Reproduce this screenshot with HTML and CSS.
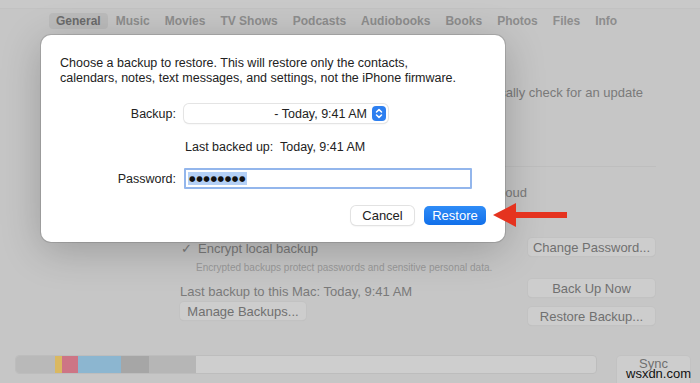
FILE: index.html
```html
<!DOCTYPE html>
<html lang="en">
<head>
  <meta charset="UTF-8">
  <meta name="viewport" content="width=device-width, initial-scale=1.0">
  <title>Restore from backup</title>
  <link rel="stylesheet" href="styles.css">
</head>
<body>
  <div class="window">
    <div class="titlebar"></div>

    <nav class="tabs">
      <span class="tab active">General</span>
      <span class="tab">Music</span>
      <span class="tab">Movies</span>
      <span class="tab">TV Shows</span>
      <span class="tab">Podcasts</span>
      <span class="tab">Audiobooks</span>
      <span class="tab">Books</span>
      <span class="tab">Photos</span>
      <span class="tab">Files</span>
      <span class="tab">Info</span>
    </nav>

    <section class="general">
      <div class="update-row">
        <p class="update-text">Your Mac will automatically check for an update</p>
      </div>
      <hr class="divider">
      <div class="icloud-row">
        <p class="icloud-text">Back up all of the data on your iPhone to iCloud</p>
      </div>

      <div class="backups">
        <div class="backups-left">
          <p class="encrypt"><span class="check">&#10003;</span>Encrypt local backup</p>
          <p class="encrypt-note">Encrypted backups protect passwords and sensitive personal data.</p>
          <p class="last-backup">Last backup to this Mac: Today, 9:41 AM</p>
          <button class="bg-btn manage">Manage Backups...</button>
        </div>
        <div class="backups-right">
          <button class="bg-btn">Change Password...</button>
          <button class="bg-btn up-now">Back Up Now</button>
          <button class="bg-btn">Restore Backup...</button>
        </div>
      </div>
    </section>

    <footer class="footer">
      <div class="storage">
        <span class="seg seg-other" style="width: 39px"></span>
        <span class="seg seg-yellow" style="width: 7px"></span>
        <span class="seg seg-pink" style="width: 16px"></span>
        <span class="seg seg-blue" style="width: 43px"></span>
        <span class="seg seg-dark" style="width: 28px"></span>
        <span class="seg seg-grey" style="width: 47px"></span>
      </div>
      <button class="bg-btn sync">Sync</button>
    </footer>

    <!-- sheet on top of the settings -->
    <div class="dialog">
      <p class="dialog-text">Choose a backup to restore. This will restore only the contacts,<br>calendars, notes, text messages, and settings, not the iPhone firmware.</p>

      <div class="form">
        <label class="form-label">Backup:</label>
        <div class="select">
          <span class="select-value">- Today, 9:41 AM</span>
          <span class="stepper">
            <svg width="14" height="15" viewBox="0 0 14 15">
              <path d="M4.5 6 L7 3.6 L9.5 6" fill="none" stroke="#fff" stroke-width="1.5" stroke-linecap="round" stroke-linejoin="round"/>
              <path d="M4.5 9 L7 11.4 L9.5 9" fill="none" stroke="#fff" stroke-width="1.5" stroke-linecap="round" stroke-linejoin="round"/>
            </svg>
          </span>
        </div>

        <span></span>
        <p class="last-backed">Last backed up:&nbsp; Today, 9:41 AM</p>

        <label class="form-label pw-label">Password:</label>
        <div class="password"><span class="dots">&#9679;&#9679;&#9679;&#9679;&#9679;&#9679;&#9679;&#9679;</span></div>
      </div>

      <div class="dialog-buttons">
        <button class="btn cancel">Cancel</button>
        <button class="btn restore">Restore</button>
      </div>
    </div>

    <svg class="arrow" width="74" height="26" viewBox="0 0 74 26">
      <polygon points="0,13 23,1 23,25" fill="#e5331f"/>
      <rect x="20" y="10" width="54" height="6" fill="#e5331f"/>
    </svg>

    <span class="watermark">wsxdn.com</span>
  </div>
</body>
</html>
```

FILE: styles.css
```css
* {
  margin: 0px;
  padding: 0px;
  box-sizing: border-box;
}

body {
  background-color: #c6c6c6;
  font-family: "Liberation Sans", Arial, sans-serif;
  overflow: hidden;
}

.window {
  position: relative;
  width: 700px;
  height: 383px;
  background-color: #c6c6c6;
}

.titlebar {
  height: 9px;
  background-color: #c9c9c9;
  border-bottom: 1px solid #c2c2c2;
}

.tabs {
  display: flex;
  margin-top: 4px;
  padding-left: 49px;
  height: 16px;
}

.tab {
  font-size: 12px;
  font-weight: bold;
  color: #8d8d8d;
  line-height: 16px;
  padding: 0px 7px;
  margin-right: 1px;
  border-radius: 4px;
}

.tab.active {
  color: #6b6b6b;
  background-color: #bbbbbb;
}

.general {
  padding-left: 180px;
  color: #7a7a7a;
  font-size: 13px;
}

.update-row {
  width: 463px;
  margin-top: 56px;
  text-align: right;
  line-height: 16px;
}

.update-text {
  white-space: nowrap;
}

.divider {
  width: 476px;
  margin-top: 65px;
  border: none;
  border-top: 1px solid #bebebe;
}

.icloud-row {
  width: 347px;
  margin-top: 18px;
  text-align: right;
  line-height: 16px;
}

.icloud-text {
  white-space: nowrap;
}

.backups {
  display: flex;
  margin-top: 37px;
}

.backups-left {
  width: 348px;
}

.encrypt {
  line-height: 16px;
  margin-top: 3px;
}

.check {
  display: inline-block;
  width: 18px;
  padding-left: 1px;
}

.encrypt-note {
  font-size: 10px;
  color: #999999;
  line-height: 12px;
  margin-top: 5px;
  padding-left: 16px;
}

.last-backup {
  line-height: 16px;
  margin-top: 10px;
}

.bg-btn {
  display: block;
  height: 18px;
  font-family: "Liberation Sans", Arial, sans-serif;
  font-size: 13px;
  color: #707070;
  background-color: #cdcdcd;
  border: none;
  border-radius: 4px;
  box-shadow: 0px 0px 0px 1px #c2c2c2, 0px 1px 1px rgba(0, 0, 0, 0.06);
}

.manage {
  width: 126px;
  margin-top: 2px;
}

.backups-right {
  width: 127px;
}

.backups-right .bg-btn {
  width: 127px;
}

.backups-right .up-now {
  margin-top: 23px;
  margin-bottom: 10px;
}

.footer {
  position: absolute;
  left: 15px;
  top: 355px;
  display: flex;
  gap: 20px;
}

.storage {
  display: flex;
  width: 582px;
  height: 19px;
  background-color: #cecece;
  border: 1px solid #bdbdbd;
  border-radius: 4px;
  overflow: hidden;
}

.seg {
  display: block;
  height: 100%;
}

.seg-other { background-color: #b9b9b9; }
.seg-yellow { background-color: #dab861; }
.seg-pink { background-color: #cd7585; }
.seg-blue { background-color: #8cb6d0; }
.seg-dark { background-color: #a6a6a6; }
.seg-grey { background-color: #b6b6b6; }

.sync {
  width: 73px;
  height: 30px;
  padding-bottom: 18px;
  margin-top: 1px;
}

/* restore sheet */

.dialog {
  position: absolute;
  left: 41px;
  top: 35px;
  width: 464px;
  height: 207px;
  padding: 21px 19px 0px 19px;
  background-color: #ffffff;
  border-radius: 10px;
  box-shadow: 0px 0px 0px 1px rgba(0, 0, 0, 0.12), 0px 8px 40px rgba(0, 0, 0, 0.22);
  color: #222222;
  font-size: 12.5px;
}

.dialog-text {
  line-height: 15px;
}

.form {
  display: grid;
  grid-template-columns: 116px auto;
  column-gap: 8px;
  align-items: center;
  margin-top: 18px;
}

.form-label {
  text-align: right;
}

.select {
  display: flex;
  align-items: center;
  justify-content: flex-end;
  width: 204px;
  height: 19px;
  padding-right: 2px;
  border-radius: 5px;
  background-color: #ffffff;
  box-shadow: 0px 0px 0px 1px #e4e4e4, 0px 1px 2px rgba(0, 0, 0, 0.1);
}

.select-value {
  margin-right: 5px;
}

.stepper {
  display: flex;
  width: 14px;
  height: 15px;
  border-radius: 4px;
  background-color: #2d7ff0;
}

.last-backed {
  margin-top: 16px;
  line-height: 16px;
  padding-left: 1px;
}

.pw-label {
  margin-top: 13px;
}

.password {
  display: flex;
  align-items: center;
  width: 288px;
  height: 21px;
  margin-top: 13px;
  padding-left: 2px;
  border: 2px solid #93b6ec;
  border-radius: 1px;
}

.dots {
  font-family: "DejaVu Sans", sans-serif;
  font-size: 7.5px;
  line-height: 13px;
  letter-spacing: 0.6px;
  background-color: #b4d0f6;
  color: #111111;
  padding: 0px 1px;
}

.dialog-buttons {
  display: flex;
  justify-content: flex-end;
  gap: 10px;
  margin-top: 17px;
}

.btn {
  height: 19px;
  border-radius: 5px;
  border: none;
  font-family: "Liberation Sans", Arial, sans-serif;
  font-size: 13px;
}

.cancel {
  width: 63px;
  color: #222222;
  background-color: #ffffff;
  box-shadow: 0px 0px 0px 1px #e2e2e2, 0px 1px 2px rgba(0, 0, 0, 0.12);
}

.restore {
  width: 62px;
  color: #ffffff;
  background: linear-gradient(#2f8cf7, #1170ea);
}

.arrow {
  position: absolute;
  left: 493px;
  top: 202px;
}

.watermark {
  position: absolute;
  left: 626px;
  top: 366px;
  font-family: "Liberation Sans", Arial, sans-serif;
  font-size: 13px;
  color: #111111;
}
```
